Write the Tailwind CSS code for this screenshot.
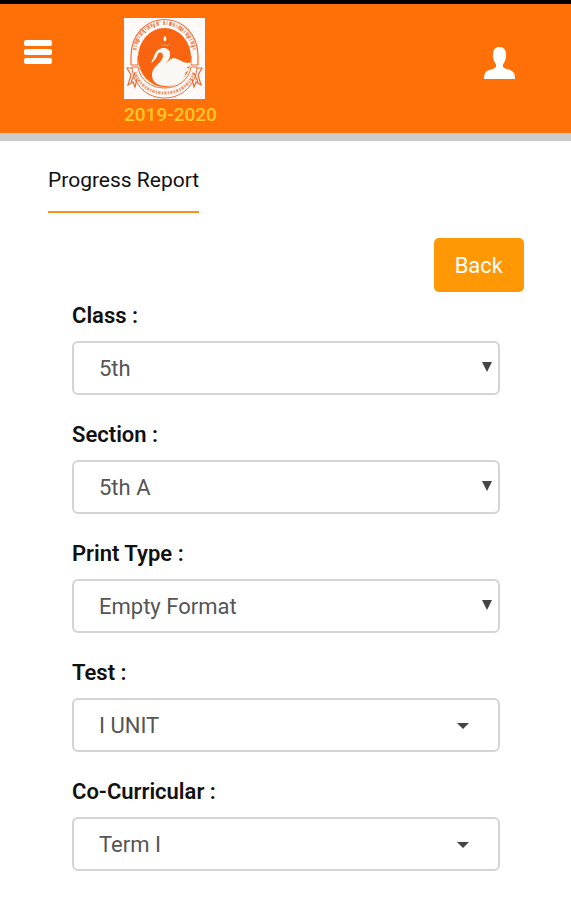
<!DOCTYPE html>
<html lang="en">
<head>
    <meta charset="utf-8">
    <meta name="viewport" content="width=device-width, initial-scale=1">
    <title>Progress Report</title>
    <script src="https://cdn.jsdelivr.net/npm/@tailwindcss/browser@4"></script>
</head>
<body class="bg-white text-[#111] font-[Roboto,sans-serif]">
<!-- Header -->
<header class="flex items-start justify-between border-t-4 border-t-black border-b-8 border-b-[#cbcbc9] bg-[#ff7009] h-[141px] pl-6 pr-14">
    <div class="flex items-start">
        <button type="button" aria-label="Menu" class="mt-9 flex w-7 flex-col gap-[3px]">
            <span class="h-[6px] w-full rounded-xs bg-white"></span>
            <span class="h-[6px] w-full rounded-xs bg-white"></span>
            <span class="h-[6px] w-full rounded-xs bg-white"></span>
        </button>
        <div class="ml-[72px] mt-[14px]">
            <svg class="h-[81px] w-[81px]" viewBox="0 0 81 81" fill="none">
                <rect width="81" height="81" fill="#fffaf7"/>
                <!-- outer ring with the lettering band -->
                <path d="M7 47V38C7 17 22 1.500 40.500 1.500S74 17 74 38v9" stroke="#ee6a35" stroke-width="1.200"/>
                <path d="M7 47h7V38M74 47h-7V38" stroke="#ee6a35" stroke-width="1.200"/>
                <path d="M10.500 32C12 18 22 7 35 5.500M39 5C55 5 69 18 70.500 32" stroke="#f29a75" stroke-width="4" stroke-dasharray="2 1.500 1 1.500 3 1"/>
                <path d="M12 22l4 2M19 12l3 3M29 6l2 4M47 4l-1 4M58 9l-2 4M66 18l-4 2M70 28l-4 1" stroke="#ee6a35"/>
                <ellipse cx="40.500" cy="39.500" rx="26.500" ry="29.500" fill="#f8640f"/>
                <!-- ribbon -->
                <path d="M8 49h6c2 13 13 21 26.500 21S65 62 67 49h6c-1 18-15 31-32.500 31S9 67 8 49z" fill="#fffaf7" stroke="#ee6a35"/>
                <path d="M11 54c4 14 16 21 29.500 21S66 68 70 54" stroke="#f29a75" stroke-width="3" stroke-dasharray="1.500 1 2.500 1"/>
                <path d="M8 50H3l4 7-3 10 5-3 2 5 2-8M11 55l-4 9M73 50h5l-4 7 3 10-5-3-2 5-2-8M70 55l4 9" stroke="#ee6a35" stroke-width="1.200"/>
                <!-- swan -->
                <path d="M27.500 45c0-3 2-4 3-8 2-5 6-7.500 10-7 4 .5 6.500 4 5.500 8-.5 3-2.500 5-4.500 8 3-3 5-6 9-6 4 1 6 3 9 4 3 1 5 1 8 .5-1 3-2 4-5 5 2 1 2 1 3 1-2 3-3 3-4 4-1 8-8 13.500-19 13.500-9 0-14.500-4-14.500-11 0-5 3-8 6-11 4-4 6-7 4.500-10-1-2-3-2-4.500-.5-1 3-2 6-6.500 9.500z" fill="#fbf7f5"/>
                <path d="M41 17.500c-2 3-2 5-.2 6 2-1 2-3 .2-6z" fill="#fff"/>
                <path d="M37 26l2 2M41 26v2M45 26l-2 2" stroke="#fbb58c"/>
            </svg>
            <p class="text-[19px] leading-8 font-medium text-[#ffc928]">2019-2020</p>
        </div>
    </div>
    <button type="button" aria-label="Account" class="mt-[43px]">
        <svg class="h-[33px] w-[31px]" viewBox="0 0 31 33" fill="#fff">
            <path d="M15.500 0C20 0 22 3 22 7.500c0 2 .3 2.500-.3 4-.7 3-1.700 4.500-2.700 6V20c2 2.500 8 2 10.500 5.500 1 1.500 1.500 3 1.500 6.500H0c0-3.500.5-5 1.500-6.500C4 22 10 22.500 12 20v-2.500c-1-1.500-2-3-2.700-6-.6-1.500-.3-2-.3-4C9 3 11 0 15.500 0z"/>
        </svg>
    </button>
</header>

<main class="px-12 pt-[23px]">
    <h1 class="inline-block border-b-2 border-[#fb9017] pb-[15px] text-[21px] leading-8">Progress Report</h1>
    <div class="mt-[25px] flex justify-end">
        <button type="button" class="-mr-px h-[54px] rounded-[5px] bg-[#ff9804] px-[21px] text-[22px] text-white">Back</button>
    </div>

    <form class="flex flex-col gap-6 pl-6 pr-[23px] pt-2">
        <div class="flex flex-col gap-[9px]">
            <label for="class" class="text-[22px] leading-8 font-semibold">Class :</label>
            <div class="relative">
                <select id="class" class="block h-[54px] w-full appearance-none rounded-md border-2 border-[#d4d4d4] bg-white pl-[25px] pr-8 text-[22px] text-[#555]">
                    <option>5th</option>
                </select>
                <svg class="pointer-events-none absolute right-2 top-[21px] h-[10px] w-[10px]" viewBox="0 0 10 10" fill="#444"><path d="M0 0h10L5 10z"/></svg>
            </div>
        </div>
        <div class="flex flex-col gap-[9px]">
            <label for="section" class="text-[22px] leading-8 font-semibold">Section :</label>
            <div class="relative">
                <select id="section" class="block h-[54px] w-full appearance-none rounded-md border-2 border-[#d4d4d4] bg-white pl-[25px] pr-8 text-[22px] text-[#555]">
                    <option>5th A</option>
                </select>
                <svg class="pointer-events-none absolute right-2 top-[21px] h-[10px] w-[10px]" viewBox="0 0 10 10" fill="#444"><path d="M0 0h10L5 10z"/></svg>
            </div>
        </div>
        <div class="flex flex-col gap-[9px]">
            <label for="print-type" class="text-[22px] leading-8 font-semibold">Print Type :</label>
            <div class="relative">
                <select id="print-type" class="block h-[54px] w-full appearance-none rounded-md border-2 border-[#d4d4d4] bg-white pl-[25px] pr-8 text-[22px] text-[#555]">
                    <option>Empty Format</option>
                </select>
                <svg class="pointer-events-none absolute right-2 top-[21px] h-[10px] w-[10px]" viewBox="0 0 10 10" fill="#444"><path d="M0 0h10L5 10z"/></svg>
            </div>
        </div>
        <div class="flex flex-col gap-[9px]">
            <label for="test" class="text-[22px] leading-8 font-semibold">Test :</label>
            <div class="relative">
                <select id="test" class="block h-[54px] w-full appearance-none rounded-md border-2 border-[#d4d4d4] bg-white pl-[25px] pr-12 text-[22px] text-[#555]">
                    <option>I UNIT</option>
                </select>
                <svg class="pointer-events-none absolute right-[31px] top-[25px] h-[6px] w-[12px]" viewBox="0 0 12 6" fill="#444"><path d="M0 0h12L6 6z"/></svg>
            </div>
        </div>
        <div class="flex flex-col gap-[9px]">
            <label for="co-curricular" class="text-[22px] leading-8 font-semibold">Co-Curricular :</label>
            <div class="relative">
                <select id="co-curricular" class="block h-[54px] w-full appearance-none rounded-md border-2 border-[#d4d4d4] bg-white pl-[25px] pr-12 text-[22px] text-[#555]">
                    <option>Term I</option>
                </select>
                <svg class="pointer-events-none absolute right-[31px] top-[25px] h-[6px] w-[12px]" viewBox="0 0 12 6" fill="#444"><path d="M0 0h12L6 6z"/></svg>
            </div>
        </div>
    </form>
</main>
</body>
</html>
